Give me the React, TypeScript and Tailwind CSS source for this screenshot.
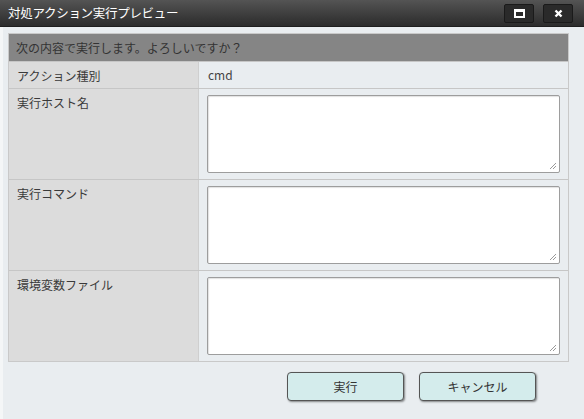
import React from "react";

const ROWS = [
  { label: "アクション種別", value: "cmd" },
  { label: "実行ホスト名", area: true },
  { label: "実行コマンド", area: true },
  { label: "環境変数ファイル", area: true },
];

function Resize() {
  return (
    <svg className="absolute right-[2px] bottom-[2px]" width="8" height="8" viewBox="0 0 8 8">
      <path d="M1 7 L7 1 M4 7 L7 4" stroke="#9a9a9a" strokeWidth="1" />
    </svg>
  );
}

export default function App() {
  return (
    <div
      className="w-[584px] h-[419px] bg-[#e9edf0] overflow-hidden flex flex-col"
      style={{ fontFamily: '"Noto Sans CJK JP", "Noto Sans", sans-serif' }}
    >
      {/* Title bar */}
      <div className="h-[27px] shrink-0 bg-gradient-to-b from-[#545454] to-[#2c2c2c] border-b border-[#1e1e1e] flex items-center justify-between pl-[8px] pr-[11px]">
        <span className="text-white text-[12.5px] tracking-[-0.3px]">対処アクション実行プレビュー</span>
        <div className="flex gap-[9px]">
          <button className="w-[30px] h-[19px] bg-[#2a2a2a] border border-[#1a1a1a] rounded-[2px] flex items-center justify-center">
            <span className="w-[11px] h-[9px] border-2 border-white border-t-[3px]" />
          </button>
          <button className="w-[30px] h-[19px] bg-[#2a2a2a] border border-[#1a1a1a] rounded-[2px] flex items-center justify-center">
            <svg width="9" height="9" viewBox="0 0 9 9">
              <path d="M1.5 1.5 L7.5 7.5 M7.5 1.5 L1.5 7.5" stroke="#fff" strokeWidth="2.4" />
            </svg>
          </button>
        </div>
      </div>

      {/* Body */}
      <div className="flex-1 pl-[5px] pr-[15px] pt-[6px] border-l-[3px] border-[#f4f6f7]">
        <div className="border border-[#c9c9c9] leading-[18px]">
          <div className="h-[27px] bg-[#858585] text-[#333] text-[12px] pl-[7px] flex items-center">
            次の内容で実行します。よろしいですか？
          </div>
          {ROWS.map((r) => (
            <div key={r.label} className="flex border-t border-[#c6c6c6]">
              <div className="w-[190px] shrink-0 bg-[#dcdcdc] border-r border-[#cfcfcf] text-[#3a3a3a] text-[12px] pl-[8px] pt-[5px]">
                {r.label}
              </div>
              <div className="flex-1 bg-[#e9edf0]">
                {r.area ? (
                  <div className="pl-[8px] pr-[8px] pt-[6px] pb-[6px]">
                    <div className="relative h-[78px] bg-white border border-[#9d9d9d] rounded-[2px] shadow-[inset_1px_1px_1px_rgba(0,0,0,0.12)]">
                      <Resize />
                    </div>
                  </div>
                ) : (
                  <div className="h-[26px] flex items-center pl-[9px] text-[12px] text-[#444]">{r.value}</div>
                )}
              </div>
            </div>
          ))}
        </div>

        <div className="flex justify-end gap-[15px] pr-[33px] mt-[10px]">
          <button className="w-[117px] h-[29px] bg-[#d4ecec] border border-[#555] rounded-[4px] shadow-[1px_1px_2px_rgba(0,0,0,0.45)] text-[12px] text-[#333]">
            実行
          </button>
          <button className="w-[117px] h-[29px] bg-[#d4ecec] border border-[#555] rounded-[4px] shadow-[1px_1px_2px_rgba(0,0,0,0.45)] text-[12px] text-[#333]">
            キャンセル
          </button>
        </div>
      </div>
    </div>
  );
}
